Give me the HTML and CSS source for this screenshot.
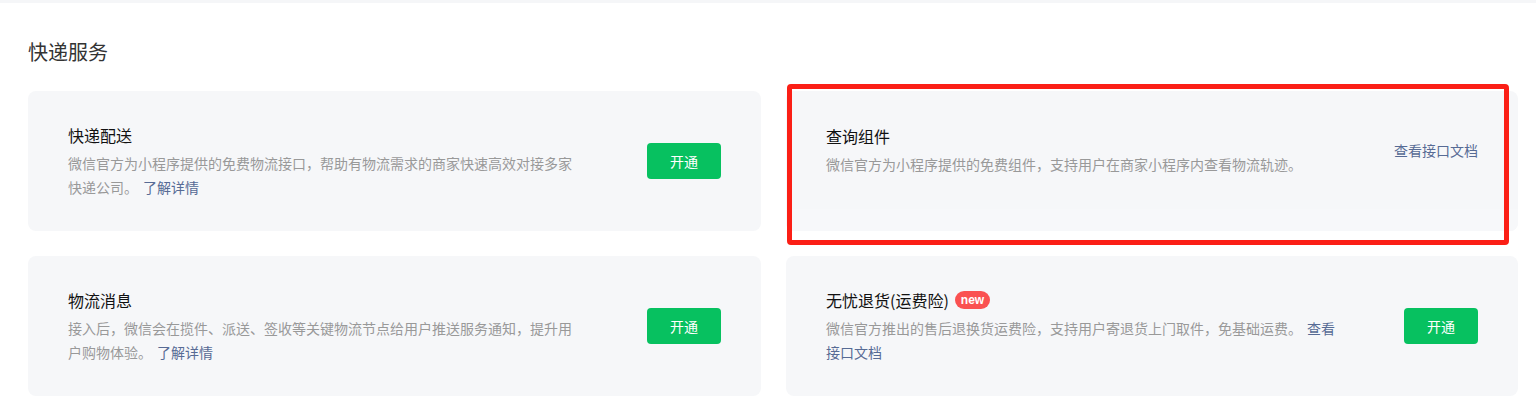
FILE: index.html
```html
<!DOCTYPE html>
<html lang="zh-CN">
<head>
<meta charset="utf-8">
<title>快递服务</title>
<link rel="stylesheet" href="styles.css">
</head>
<body>
<div class="topbar"></div>
<section class="section">
  <h2 class="heading">快递服务</h2>
  <div class="grid">
    <div class="card">
      <div class="card-main">
        <div class="info">
          <div class="title">快递配送</div>
          <p class="desc"><span>微信官方为小程序提供的免费物流接口，帮助有物流需求的商家快速高效对接多家快递公司。</span><a class="link inline" href="#">了解详情</a></p>
        </div>
        <button class="btn">开通</button>
      </div>
    </div>
    <div class="card card-split">
      <div class="card-main card-main-short">
        <div class="info">
          <div class="title">查询组件</div>
          <p class="desc">微信官方为小程序提供的免费组件，支持用户在商家小程序内查看物流轨迹。</p>
        </div>
        <a class="link doc" href="#">查看接口文档</a>
      </div>
      <div class="card-foot"></div>
    </div>
    <div class="card">
      <div class="card-main">
        <div class="info">
          <div class="title">物流消息</div>
          <p class="desc"><span>接入后，微信会在揽件、派送、签收等关键物流节点给用户推送服务通知，提升用户购物体验。</span><a class="link inline" href="#">了解详情</a></p>
        </div>
        <button class="btn">开通</button>
      </div>
    </div>
    <div class="card">
      <div class="card-main">
        <div class="info">
          <div class="title">无忧退货(运费险)<span class="badge">new</span></div>
          <p class="desc"><span>微信官方推出的售后退换货运费险，支持用户寄退货上门取件，免基础运费。</span><a class="link inline" href="#">查看接口文档</a></p>
        </div>
        <button class="btn">开通</button>
      </div>
    </div>
  </div>
</section>
<div class="highlight"></div>
</body>
</html>
```
FILE: styles.css
```css
* { box-sizing: border-box; }
html, body {
  margin: 0;
  padding: 0;
  background: #fff;
}
body {
  font-family: "Noto Sans CJK SC", "Noto Sans", sans-serif;
  color: #1a1a1a;
  width: 1536px;
  height: 408px;
  overflow: hidden;
  position: relative;
}
.topbar {
  height: 3px;
  background: #f5f6f8;
}
.section {
  padding: 0 18px 0 28px;
}
.heading {
  margin: 35px 0 0;
  font-size: 20px;
  line-height: 28px;
  font-weight: 400;
  color: #333;
}
.grid {
  margin-top: 25px;
  display: grid;
  grid-template-columns: 733px 732px;
  grid-auto-rows: 140px;
  column-gap: 25px;
  row-gap: 25px;
}
.card {
  background: #f6f7f9;
  border-radius: 8px;
  display: flex;
  flex-direction: column;
  overflow: hidden;
}
.card-main {
  flex: 1;
  display: flex;
  align-items: center;
  justify-content: space-between;
  padding: 0 40px;
}
.card-main-short {
  flex: 0 0 118px;
}
.card-foot {
  flex: 1;
  background: #f7f8fa;
}
.info {
  width: 510px;
}
.title {
  font-size: 16px;
  line-height: 24px;
  color: #111;
  margin-bottom: 4px;
  display: flex;
  align-items: center;
}
.desc {
  margin: 0;
  font-size: 14px;
  line-height: 24px;
  color: #999;
}
.link {
  color: #576b95;
  text-decoration: none;
}
.inline {
  margin-left: 5px;
}
.doc {
  font-size: 14px;
  line-height: 24px;
}
.badge {
  display: inline-block;
  margin-left: 6px;
  height: 18px;
  line-height: 18px;
  padding: 0 6px;
  border-radius: 9px;
  background: #fa5151;
  color: #fff;
  font-family: "Liberation Sans", "Noto Sans", sans-serif;
  font-weight: 700;
  font-size: 12px;
}
.btn {
  width: 74px;
  height: 36px;
  border: none;
  border-radius: 4px;
  background: #07c160;
  color: #fff;
  font-family: "Noto Sans CJK SC", sans-serif;
  font-size: 14px;
  padding: 0;
  flex: none;
}
.highlight {
  position: absolute;
  left: 787px;
  top: 84px;
  width: 722px;
  height: 161px;
  border: 5px solid #fb1f16;
  border-radius: 4px;
  pointer-events: none;
}
```
